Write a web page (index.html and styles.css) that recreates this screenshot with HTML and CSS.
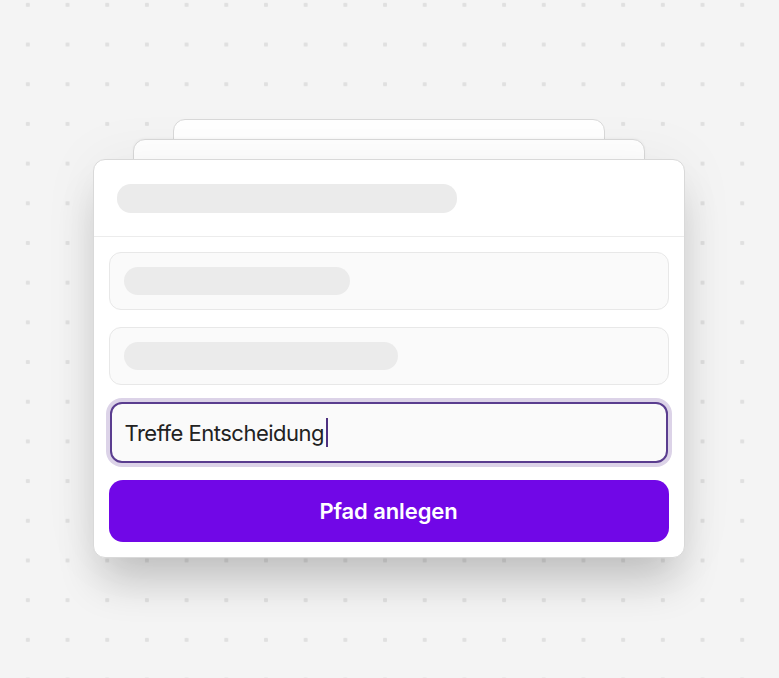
FILE: index.html
```html
<!DOCTYPE html>
<html lang="de">
<head>
    <meta charset="UTF-8">
    <meta name="viewport" content="width=device-width, initial-scale=1.0">
    <title>Pfad anlegen</title>
    <link rel="stylesheet" href="styles.css">
</head>
<body>
    <div class="deck">
        <div class="sheet sheet-back-far"></div>
        <div class="sheet sheet-back"></div>
        <div class="sheet card">
            <div class="card-header">
                <div class="skeleton skeleton-title"></div>
            </div>
            <div class="card-body">
                <div class="field">
                    <div class="skeleton skeleton-short"></div>
                </div>
                <div class="field">
                    <div class="skeleton skeleton-medium"></div>
                </div>
                <div class="field field-active">
                    <span class="field-text">Treffe Entscheidung</span><span class="caret"></span>
                </div>
                <button class="submit">Pfad anlegen</button>
            </div>
        </div>
    </div>
</body>
</html>
```

FILE: styles.css
```css
body {
    margin: 0;
    height: 678px;
    overflow: hidden;
    font-family: Inter, "Noto Sans", sans-serif;
    background-color: #f4f4f4;
    background-image: radial-gradient(circle, #e0e0e0 2px, transparent 2.5px);
    background-size: 39.7px 39.7px;
    background-position: 8px -15px;
}

.deck {
    display: flex;
    flex-direction: column;
    align-items: center;
    padding-top: 119px;
    padding-right: 2px;
}

.sheet {
    box-sizing: border-box;
    background-color: #fff;
    border: 1px solid #d9d9d9;
    border-radius: 12px;
}

.sheet-back-far {
    width: 432px;
    height: 40px;
    margin-bottom: -20px;
}

.sheet-back {
    width: 512px;
    height: 40px;
    margin-bottom: -20px;
    box-shadow: 0 -1px 3px rgba(0, 0, 0, 0.03);
}

.card {
    width: 592px;
    box-shadow: 0 30px 44px -8px rgba(0, 0, 0, 0.2), 0 0 60px rgba(0, 0, 0, 0.05);
}

.card-header {
    height: 76px;
    padding: 0 23px;
    display: flex;
    align-items: center;
    border-bottom: 1px solid #ececec;
}

.skeleton {
    height: 28px;
    border-radius: 14px;
    background-color: #ebebeb;
}

.skeleton-title {
    width: 340px;
    height: 29px;
}

.skeleton-short {
    width: 226px;
}

.skeleton-medium {
    width: 274px;
}

.card-body {
    padding: 15px 15px 15px;
    display: flex;
    flex-direction: column;
    gap: 17px;
}

.field {
    box-sizing: border-box;
    height: 58px;
    padding: 0 14px;
    display: flex;
    align-items: center;
    background-color: #fafafa;
    border: 1px solid #e8e8e8;
    border-radius: 12px;
}

.field-active {
    height: 61px;
    margin: 0 1px;
    padding: 0 13px;
    border: 2px solid #5a3d8f;
    box-shadow: 0 0 0 4px #dcd3e8;
}

.field-text {
    font-size: 22px;
    letter-spacing: -0.5px;
    color: #222;
}

.caret {
    width: 2px;
    height: 29px;
    margin-left: 2px;
    background-color: #4e3180;
}

.submit {
    height: 62px;
    border: none;
    border-radius: 14px;
    background-color: #7107e7;
    color: #fff;
    font-family: Inter, "Noto Sans", sans-serif;
    font-size: 22px;
    font-weight: 600;
    letter-spacing: -0.1px;
}
```
